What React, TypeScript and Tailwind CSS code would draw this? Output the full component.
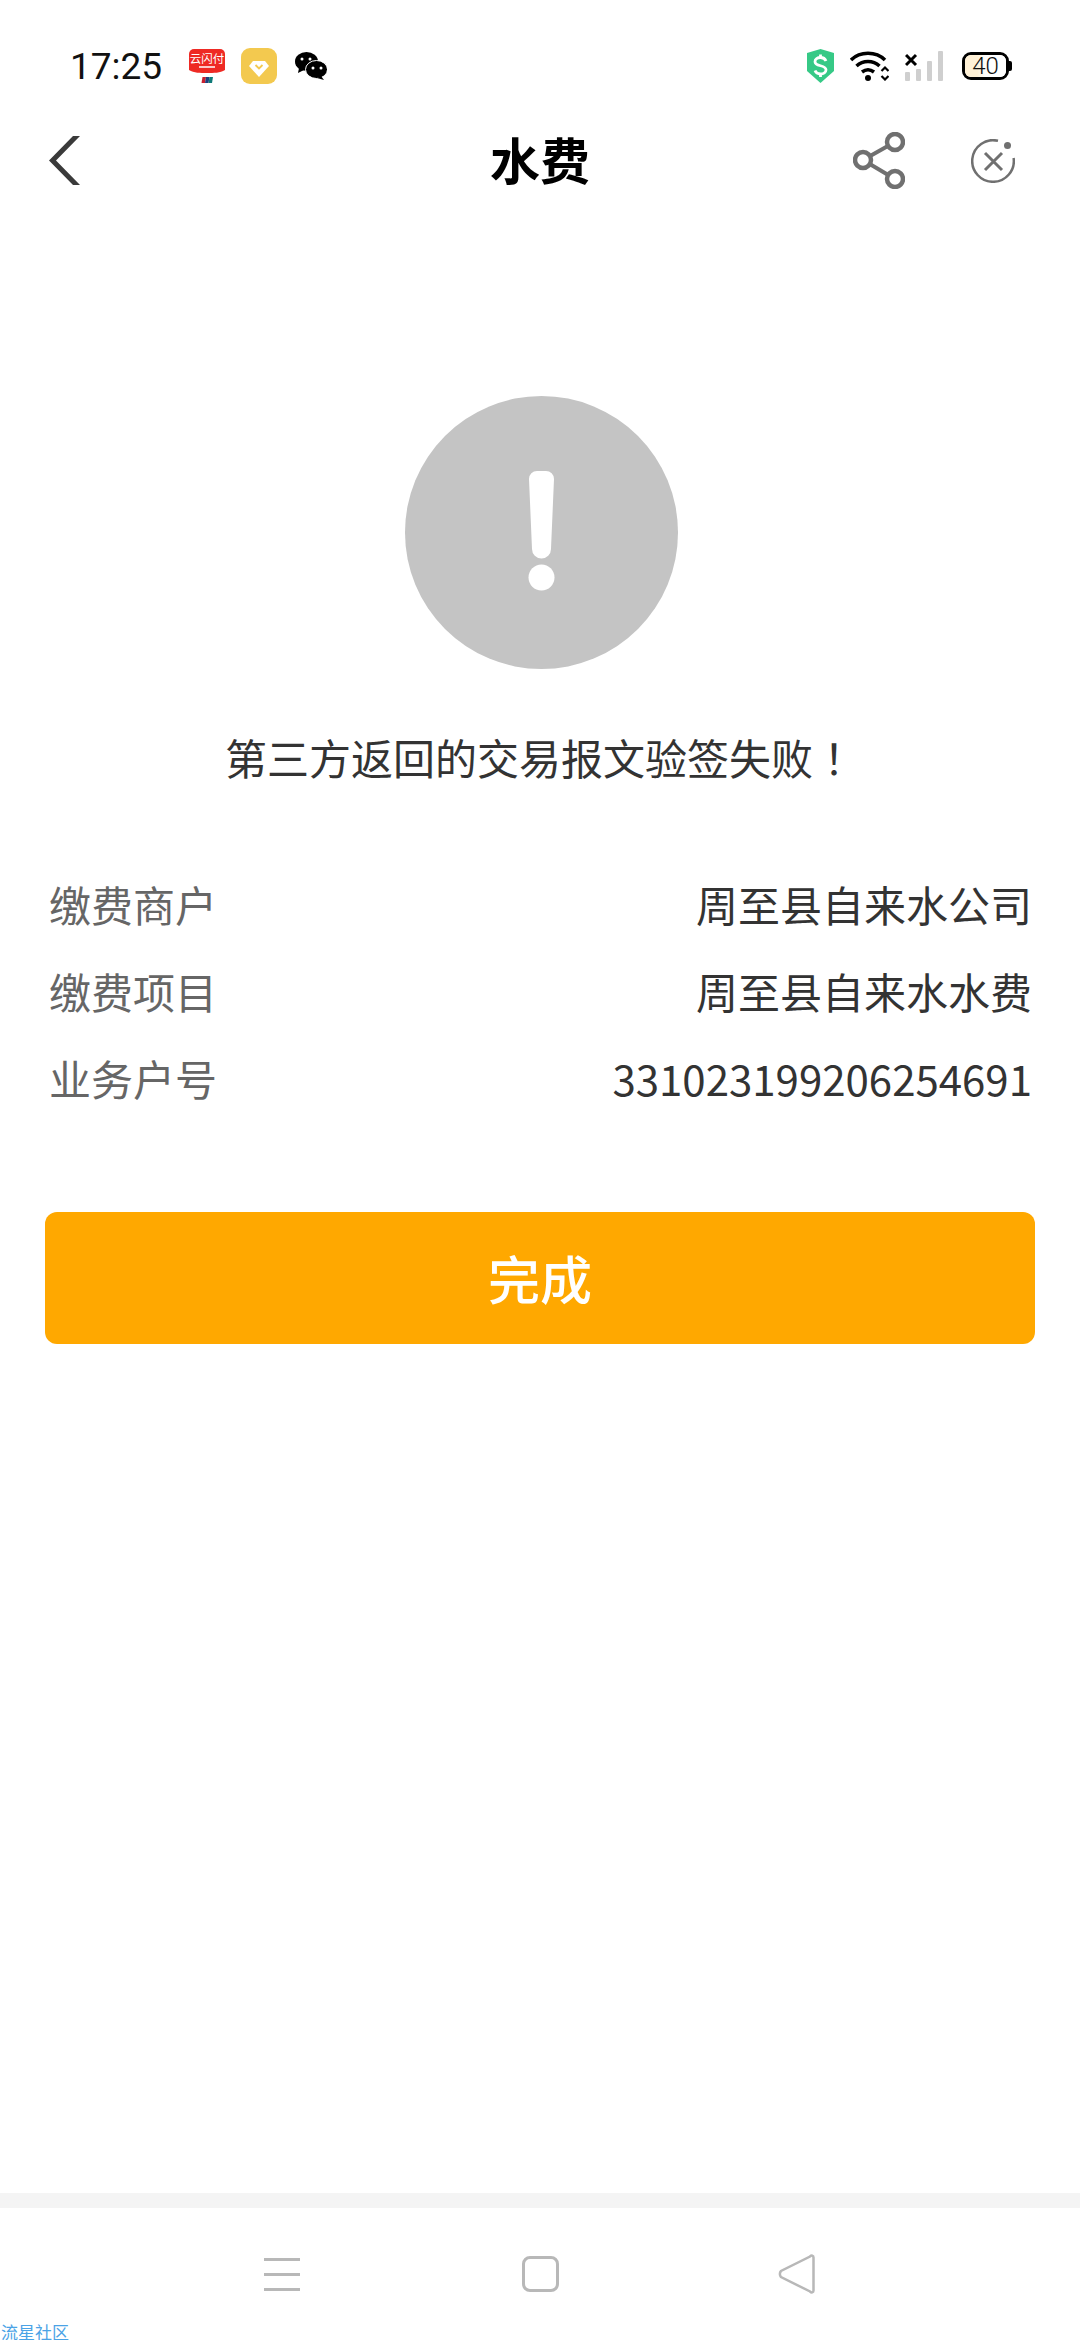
import React from 'react';

const cjk = "font-['Noto_Sans_CJK_SC','Noto_Sans',sans-serif]";

function YunIcon() {
  return (
    <svg width="36" height="34" viewBox="0 0 36 34">
      <path d="M0 5a5 5 0 0 1 5-5h26a5 5 0 0 1 5 5v16c-5 3-11 3-18 3S5 24 0 21z" fill="#ee2a24" />
      <text x="18" y="14" textAnchor="middle" fontSize="11.5" fill="#fff" fontFamily="Noto Sans CJK SC, sans-serif">云闪付</text>
      <rect x="10" y="17" width="16" height="2" fill="#fff" opacity="0.75" />
      <path d="M13.500 28h3.500l-1 6h-3.500z" fill="#c8202f" />
      <path d="M17 28h3.500l-1 6H16z" fill="#1d3f7c" />
      <path d="M20.500 28h3.500l-1 6h-3.500z" fill="#0f7a78" />
    </svg>
  );
}

function DiamondIcon() {
  return (
    <svg width="36" height="36" viewBox="0 0 36 36">
      <rect width="36" height="36" rx="9" fill="#f3c94f" />
      <path d="M12 13h12l4 5L18 29 8 18z" fill="#fff" />
      <path d="M14.500 17l3.500 3.500 3.500-3.500" fill="none" stroke="#f3c94f" strokeWidth="1.800" />
    </svg>
  );
}

function WechatIcon() {
  return (
    <svg width="32" height="28" viewBox="0 0 32 28">
      <ellipse cx="11.500" cy="9.500" rx="11.500" ry="9.500" fill="#000" />
      <path d="M4 16l-1 5 6-3z" fill="#000" />
      <ellipse cx="21.500" cy="17.500" rx="11" ry="9" fill="#000" stroke="#fff" strokeWidth="1" />
      <path d="M26 24l3 4-7-2z" fill="#000" />
      <circle cx="7" cy="7" r="1.500" fill="#fff" />
      <circle cx="15" cy="7" r="1.500" fill="#fff" />
      <circle cx="18" cy="16" r="1.500" fill="#fff" />
      <circle cx="26" cy="16" r="1.500" fill="#fff" />
    </svg>
  );
}

function ShieldIcon() {
  return (
    <svg width="27" height="34" viewBox="0 0 27 34">
      <path d="M13.500 0L27 4v18L13.500 34 0 22V4z" fill="#36c986" />
      <path d="M19 12c-1-2.500-3-3.500-5.500-3.500-3 0-5.500 1.500-5.500 4.200 0 5.300 11 2.800 11 8.100 0 2.700-2.500 4.200-5.500 4.200-2.500 0-4.500-1-5.500-3.500M13.500 5.500v3M13.500 25v3" fill="none" stroke="#fff" strokeWidth="2.800" />
    </svg>
  );
}

function WifiIcon() {
  return (
    <svg width="39" height="30" viewBox="0 0 39 30">
      <path d="M1 9C10 0 26 0 35 9" fill="none" stroke="#000" strokeWidth="3.500" />
      <path d="M6.500 15C13 9 23 9 29.500 15" fill="none" stroke="#000" strokeWidth="3.500" />
      <path d="M12 21c4-3 8-3 12 0" fill="none" stroke="#000" strokeWidth="3.500" />
      <circle cx="18" cy="27" r="3" fill="#000" />
      <path d="M31.500 20l3.500-3.500 3.500 3.500M31.500 25l3.500 3.500 3.500-3.500" fill="none" stroke="#000" strokeWidth="2.200" />
    </svg>
  );
}

function SignalIcon() {
  return (
    <svg width="38" height="30" viewBox="0 0 38 30">
      <path d="M1 4l10 10M11 4L1 14" stroke="#000" strokeWidth="3" />
      <rect x="0" y="21" width="5" height="9" rx="1" fill="#cfcfcf" />
      <rect x="11" y="18" width="5" height="12" rx="1" fill="#cfcfcf" />
      <rect x="22" y="10" width="5" height="20" rx="1" fill="#cfcfcf" />
      <rect x="33" y="0" width="5" height="30" rx="1" fill="#cfcfcf" />
    </svg>
  );
}

function Battery() {
  return (
    <div className="flex items-center">
      <div className="flex h-[28px] w-[47px] overflow-hidden rounded-[9px] border-[3px] border-black">
        <div className="flex h-full w-full items-center justify-center bg-gradient-to-r from-[#fff1d6] from-[30%] to-white to-[50%] font-['Roboto',sans-serif] text-[24px] leading-none font-light text-[#111]">
          40
        </div>
      </div>
      <div className="h-[10px] w-[3px] rounded-r-[2px] bg-black" />
    </div>
  );
}

function BackIcon() {
  return (
    <svg width="31" height="49" viewBox="0 0 31 49">
      <path d="M31 0h-7L0 24.500 24 49h7L7 24.500z" fill="#3a3a3a" />
    </svg>
  );
}

function ShareIcon() {
  return (
    <svg width="52" height="57" viewBox="0 0 52 57">
      <path d="M10 28L42 10M10 28l32 19" stroke="#707070" strokeWidth="4" />
      <circle cx="10" cy="28" r="8" fill="#fff" stroke="#707070" strokeWidth="4.500" />
      <circle cx="42" cy="10" r="8" fill="#fff" stroke="#707070" strokeWidth="4.500" />
      <circle cx="42" cy="47" r="8" fill="#fff" stroke="#707070" strokeWidth="4.500" />
    </svg>
  );
}

function CloseIcon() {
  return (
    <svg width="44" height="44" viewBox="0 0 44 44">
      <path d="M27 1.800A20.800 20.800 0 1 0 42.600 19" fill="none" stroke="#707070" strokeWidth="2.500" />
      <circle cx="36.500" cy="6.500" r="3.500" fill="#707070" />
      <path d="M14 14l17 17M31 14L14 31" stroke="#707070" strokeWidth="3" />
    </svg>
  );
}

function AlertIcon() {
  return (
    <svg width="273" height="273" viewBox="0 0 273 273">
      <circle cx="136.500" cy="136.500" r="136.500" fill="#c4c4c4" />
      <path d="M124 83a8 8 0 0 1 8-8h9a8 8 0 0 1 8 8l-3 70a8.500 8.500 0 0 1-19 0z" fill="#fff" />
      <circle cx="136.500" cy="181.500" r="13" fill="#fff" />
    </svg>
  );
}

function MenuNavIcon() {
  return (
    <div className="flex h-[33px] w-[36px] flex-col justify-between">
      <div className="h-[3px] bg-[#b8b8b8]" />
      <div className="h-[3px] bg-[#b8b8b8]" />
      <div className="h-[3px] bg-[#b8b8b8]" />
    </div>
  );
}

function BackNavIcon() {
  return (
    <svg width="37" height="40" viewBox="0 0 37 40">
      <path d="M32 2.500c1.500-1.500 3.500-1 3.500 1v33c0 2-2 2.500-3.500 1L3 23c-1.500-1.500-1.500-4.500 0-6z" fill="none" stroke="#b8b8b8" strokeWidth="2.500" />
    </svg>
  );
}

function InfoRow({ label, value }: { label: string; value: string }) {
  return (
    <div className="flex h-[87px] items-center justify-between">
      <span className="text-[#666]">{label}</span>
      <span className="text-[#333]">{value}</span>
    </div>
  );
}

export default function App() {
  return (
    <div className={`flex h-[2340px] w-[1080px] flex-col overflow-hidden bg-white ${cjk}`}>
      {/* status bar */}
      <div className="flex h-[132px] shrink-0 items-center justify-between pr-[68px] pl-[70px]">
        <div className="flex items-center">
          <span className="w-[119px] font-['Roboto',sans-serif] text-[37px] leading-none text-[#111]">17:25</span>
          <div className="flex items-center gap-[16px]">
            <YunIcon />
            <DiamondIcon />
            <div className="ml-[2px]">
              <WechatIcon />
            </div>
          </div>
        </div>
        <div className="flex items-center gap-[16px]">
          <ShieldIcon />
          <WifiIcon />
          <SignalIcon />
          <div className="ml-[3px]">
            <Battery />
          </div>
        </div>
      </div>

      {/* title bar */}
      <div className="grid h-[50px] shrink-0 grid-cols-[1fr_auto_1fr] items-center">
        <div className="pl-[49px]">
          <BackIcon />
        </div>
        <span className="pb-[6px] text-[50px] leading-none font-bold text-black">水费</span>
        <div className="flex items-center justify-end gap-[66px] pr-[65px]">
          <ShareIcon />
          <CloseIcon />
        </div>
      </div>

      <div className="mt-[214px] flex flex-col items-center">
        <div className="ml-[2px]">
          <AlertIcon />
        </div>
        <p className="mt-[59px] text-[42px] leading-[58px] text-[#333]">
          第三方返回的交易报文验签失败<span className="font-['Noto_Sans_CJK_TC',sans-serif]">！</span>
        </p>
      </div>

      <div className="mt-[74px] pr-[48px] pl-[49px] text-[42px] leading-[58px]">
        <InfoRow label="缴费商户" value="周至县自来水公司" />
        <InfoRow label="缴费项目" value="周至县自来水水费" />
        <InfoRow label="业务户号" value="331023199206254691" />
      </div>

      <button className="mx-[45px] mt-[91px] h-[132px] shrink-0 rounded-[12px] bg-[#ffa800] text-[52px] font-medium text-white">完成</button>

      <div className="mt-auto h-[15px] shrink-0 bg-[#f4f4f4]" />

      {/* bottom nav */}
      <div className="relative flex h-[132px] shrink-0 items-center pl-[264px]">
        <MenuNavIcon />
        <div className="ml-[222px] h-[36px] w-[37px] rounded-[8px] border-[3px] border-[#b8b8b8]" />
        <div className="ml-[219px]">
          <BackNavIcon />
        </div>
        <span className="absolute bottom-0 left-[1px] text-[17px] leading-[17px] text-[#4ba3e6]">流星社区</span>
      </div>
    </div>
  );
}
